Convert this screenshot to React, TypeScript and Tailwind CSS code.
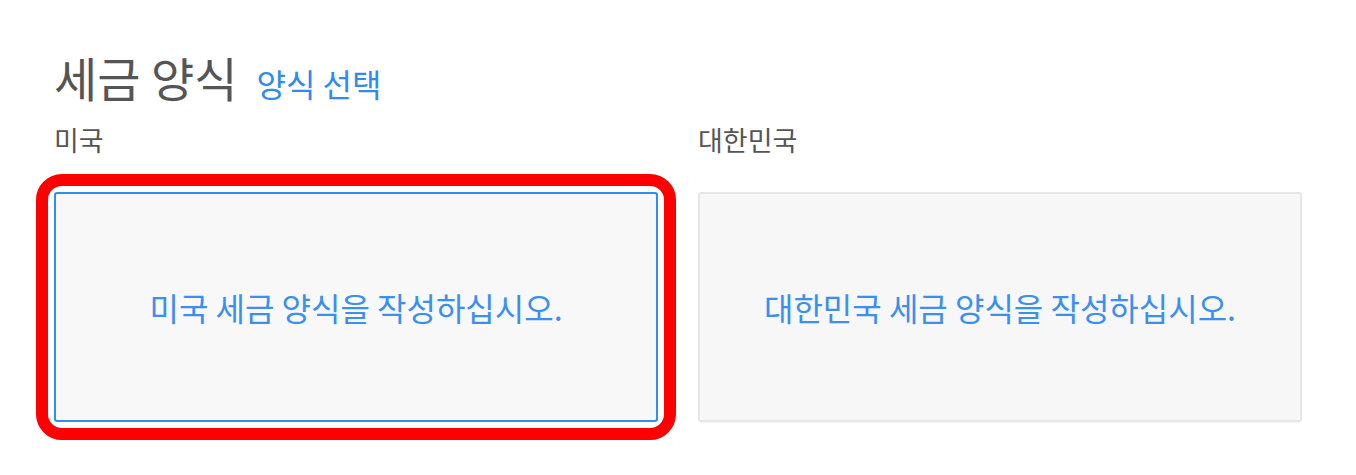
const KR = "font-['Noto_Sans_CJK_KR','Noto_Sans',sans-serif]";

function FormCard({ label, text, selected }: { label: string; text: string; selected?: boolean }) {
  return (
    <div className="flex flex-col">
      <div className="text-[27px] leading-[36px] text-[#555] mb-[34px]">{label}</div>
      <div className="relative">
        {selected && (
          <div className="absolute -inset-[18px] rounded-[26px] border-[12px] border-[#ff0000] pointer-events-none" />
        )}
        <div
          className={
            selected
              ? "h-[230px] rounded-[3px] border-2 border-[#2e8ff0] bg-[#f8f8f9] flex items-center justify-center"
              : "h-[230px] rounded-[3px] border-2 border-[#e6e6e6] bg-[#f7f7f7] shadow-[0_1px_1px_rgba(0,0,0,0.04)] flex items-center justify-center"
          }
        >
          <span className="text-[32px] text-[#3a8ff0]">{text}</span>
        </div>
      </div>
    </div>
  );
}

export default function App() {
  return (
    <div className={`${KR} w-[1356px] h-[475px] bg-white pl-[54px] pr-[54px] pt-[46px]`}>
      <div className="flex items-baseline gap-[19px]">
        <h1 className="text-[47px] leading-[62px] font-normal text-[#555]">세금 양식</h1>
        <a className="text-[32px] text-[#2f8bef]">양식 선택</a>
      </div>
      <div className="grid grid-cols-2 gap-[40px] mt-[14px]">
        <FormCard label="미국" text="미국 세금 양식을 작성하십시오." selected />
        <FormCard label="대한민국" text="대한민국 세금 양식을 작성하십시오." />
      </div>
    </div>
  );
}
